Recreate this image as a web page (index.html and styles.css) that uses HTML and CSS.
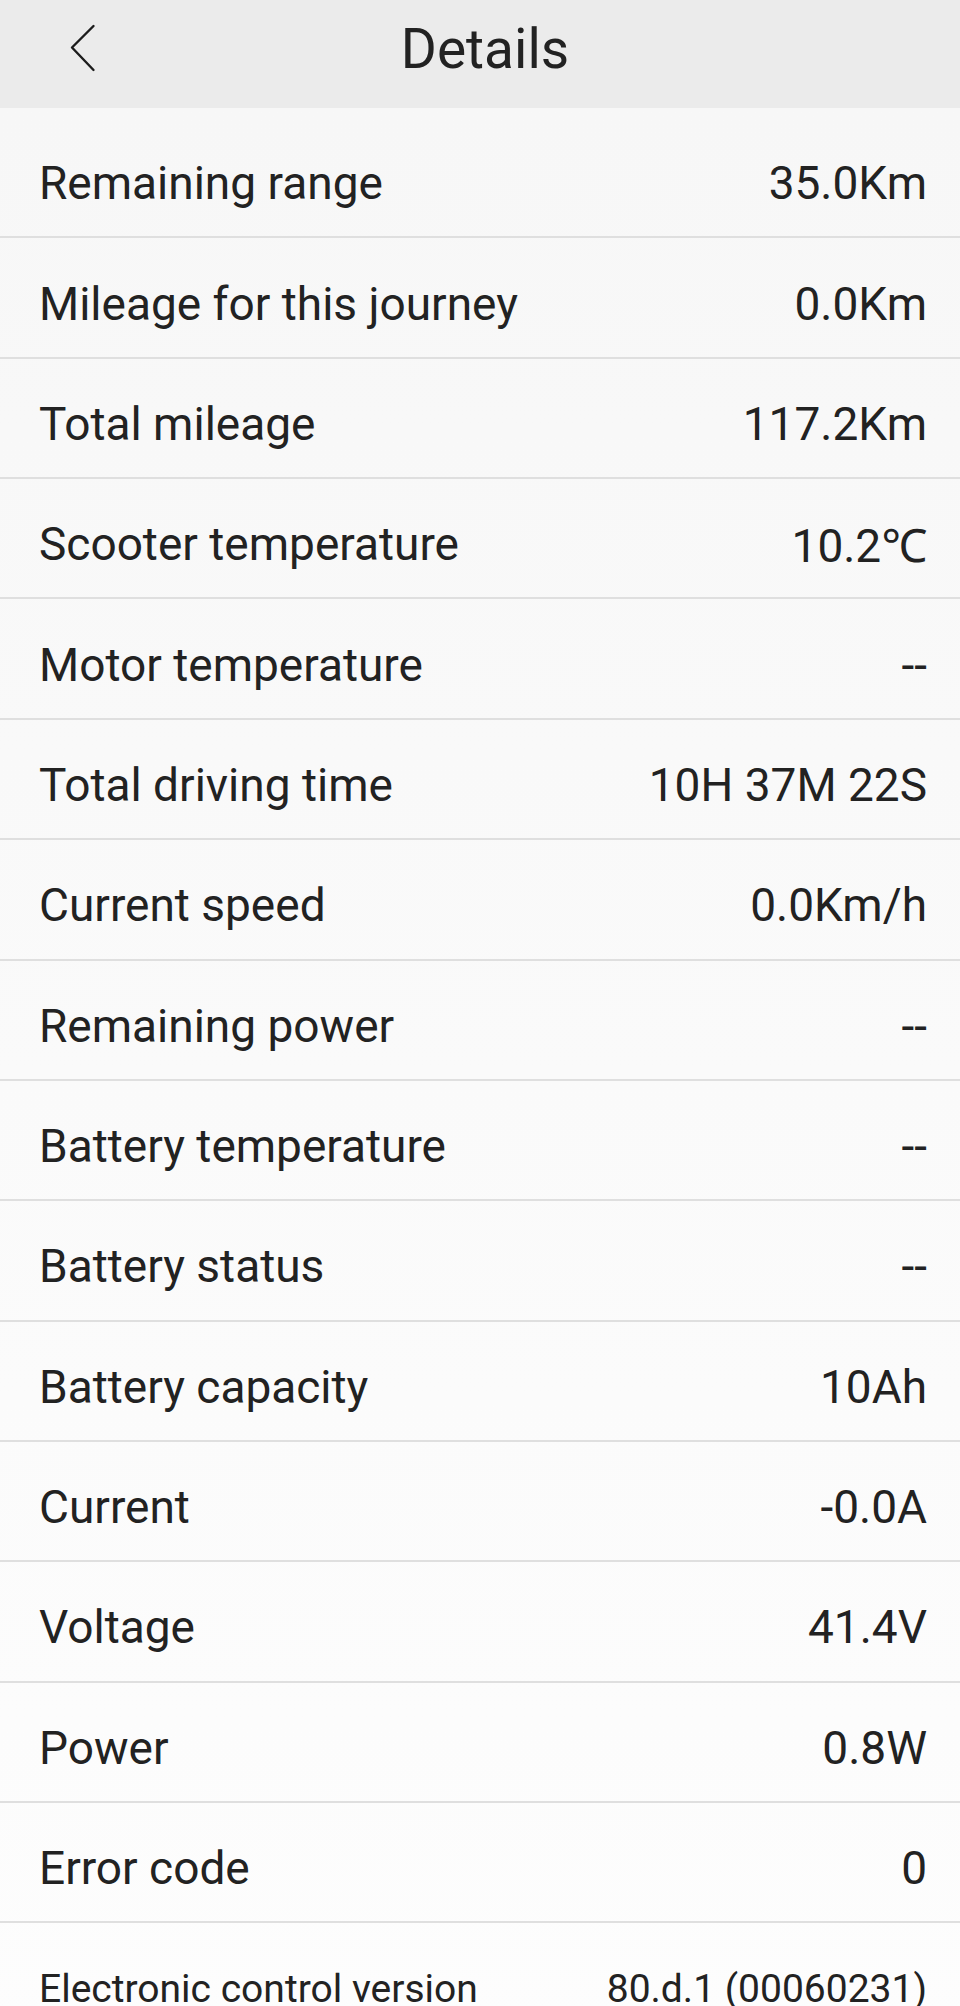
FILE: index.html
```html
<!DOCTYPE html>
<html lang="en">
<head>
<meta charset="utf-8">
<title>Details</title>
<link rel="stylesheet" href="styles.css">
</head>
<body>
<header class="topbar">
  <div class="topbar-left">
    <button class="back" aria-label="Back">
      <svg width="26" height="48" viewBox="0 0 26 48" aria-hidden="true">
        <path d="M23.5 2 L2 23.5 L23.5 46" fill="none" stroke="#1c1c1c" stroke-width="2.4" stroke-linecap="round" stroke-linejoin="round"/>
      </svg>
    </button>
  </div>
  <h1 class="title">Details</h1>
  <div class="topbar-right"></div>
</header>
<main class="list">
  <div class="row"><span class="label">Remaining range</span><span class="value">35.0Km</span></div>
  <div class="row"><span class="label">Mileage for this journey</span><span class="value">0.0Km</span></div>
  <div class="row"><span class="label">Total mileage</span><span class="value">117.2Km</span></div>
  <div class="row"><span class="label">Scooter temperature</span><span class="value">10.2℃</span></div>
  <div class="row"><span class="label">Motor temperature</span><span class="value">--</span></div>
  <div class="row"><span class="label">Total driving time</span><span class="value">10H 37M 22S</span></div>
  <div class="row"><span class="label">Current speed</span><span class="value">0.0Km/h</span></div>
  <div class="row"><span class="label">Remaining power</span><span class="value">--</span></div>
  <div class="row"><span class="label">Battery temperature</span><span class="value">--</span></div>
  <div class="row"><span class="label">Battery status</span><span class="value">--</span></div>
  <div class="row"><span class="label">Battery capacity</span><span class="value">10Ah</span></div>
  <div class="row"><span class="label">Current</span><span class="value">-0.0A</span></div>
  <div class="row"><span class="label">Voltage</span><span class="value">41.4V</span></div>
  <div class="row"><span class="label">Power</span><span class="value">0.8W</span></div>
  <div class="row"><span class="label">Error code</span><span class="value">0</span></div>
  <div class="row row-small"><span class="label">Electronic control version</span><span class="value">80.d.1 (00060231)</span></div>
</main>
</body>
</html>
```

FILE: styles.css
```css
html, body {
  margin: 0;
  padding: 0;
}

body {
  font-family: Roboto, "Noto Sans", "Liberation Sans", sans-serif;
  color: #222222;
  background: #fbfbfb;
}

.topbar {
  height: 108px;
  background: #ebebeb;
  display: grid;
  grid-template-columns: 1fr auto 1fr;
  align-items: center;
}

.topbar-left {
  display: flex;
  align-items: center;
  padding-left: 70px;
}

.back {
  display: flex;
  align-items: center;
  justify-content: center;
  padding: 0;
  margin: 0 0 12px 0;
  border: 0;
  background: transparent;
}

.title {
  margin: 0 0 10px 10px;
  font-size: 55px;
  font-weight: 400;
  color: #222222;
  line-height: 1;
}

.list {
  padding-top: 10px;
  background: linear-gradient(#f7f7f7, #fdfdfd);
}

.row {
  box-sizing: content-box;
  height: 106.36px;
  padding: 12px 33px 0 39px;
  border-bottom: 2px solid #dfdfdf;
  display: flex;
  align-items: center;
  justify-content: space-between;
  font-size: 46px;
}

.row-small {
  font-size: 39px;
  border-bottom: 0;
}

.label,
.value {
  white-space: nowrap;
}
```
